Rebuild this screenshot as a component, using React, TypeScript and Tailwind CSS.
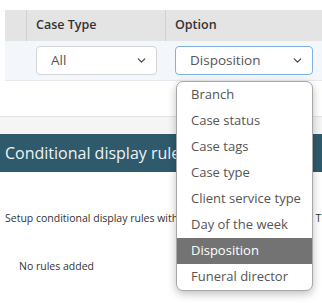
import { ChevronDown } from "lucide-react";

const options = [
  "Branch",
  "Case status",
  "Case tags",
  "Case type",
  "Client service type",
  "Day of the week",
  "Disposition",
  "Funeral director",
];

function SelectBox({ value, focused, open }: { value: string; focused?: boolean; open?: boolean }) {
  return (
    <div className="relative">
      <div
        className={
          focused
            ? "flex h-[29px] items-center justify-between rounded-[4px] border border-[#7fb0e0] bg-white pl-[14px] pr-[8px]"
            : "flex h-[29px] items-center justify-between rounded-[4px] border border-[#d4d4d4] bg-white pl-[14px] pr-[8px]"
        }
      >
        <span className="text-[13.5px] text-[#555]">{value}</span>
        <ChevronDown size={13} strokeWidth={2.2} className="text-[#444]" />
      </div>
      {open && (
        <div className="absolute left-[1px] top-[35px] z-10 w-[137px] overflow-hidden rounded-[7px] border border-[#a8a8a8] bg-white shadow-[0_3px_8px_rgba(0,0,0,0.25)]">
          {options.map((o) => (
            <div
              key={o}
              className={
                o === "Disposition"
                  ? "flex h-[26px] items-center bg-[#737373] pl-[14px] text-[13px] text-white"
                  : "flex h-[26px] items-center pl-[14px] text-[13px] text-[#555]"
              }
            >
              {o}
            </div>
          ))}
        </div>
      )}
    </div>
  );
}

export default function App() {
  return (
    <div className="h-[303px] w-[322px] overflow-hidden bg-white font-['Open_Sans',sans-serif]">
      {/* Rule editor table */}
      <div className="pl-[5px] pt-[10px]">
        <div className="flex h-[31px] bg-[#e4e4e4] text-[12.5px] font-semibold text-[#333]">
          <div className="w-[22px] border-r border-[#d0d0d0]" />
          <div className="flex w-[139px] items-center border-r border-[#d0d0d0] pl-[9px]">Case Type</div>
          <div className="flex flex-1 items-center pl-[9px]">Option</div>
        </div>
        <div className="flex h-[40px] items-start border-b border-[#e6eaee] bg-[#f3f7fb] pt-[5px]">
          <div className="w-[22px]" />
          <div className="w-[139px] pl-[9px] pr-[9px]">
            <SelectBox value="All" />
          </div>
          <div className="flex-1 pl-[9px] pr-[9px]">
            <SelectBox value="Disposition" focused open />
          </div>
        </div>
      </div>

      {/* Conditional display rules section */}
      <div className="mt-[35px] h-[18px] border-t border-[#e2e2e2] bg-[#f5f5f5]" />
      <div className="flex h-[38px] items-center bg-[#2f5a6c] pl-[5px] text-[16px] text-[#eef3f5]">
        Conditional display rules
      </div>
      <div className="whitespace-nowrap pl-[5px] pt-[39px] text-[10.5px] text-[#333]">
        Setup conditional display rules with the option provided below. These
      </div>
      <div className="pl-[19px] pt-[32px] text-[10.5px] text-[#333]">No rules added</div>
    </div>
  );
}
